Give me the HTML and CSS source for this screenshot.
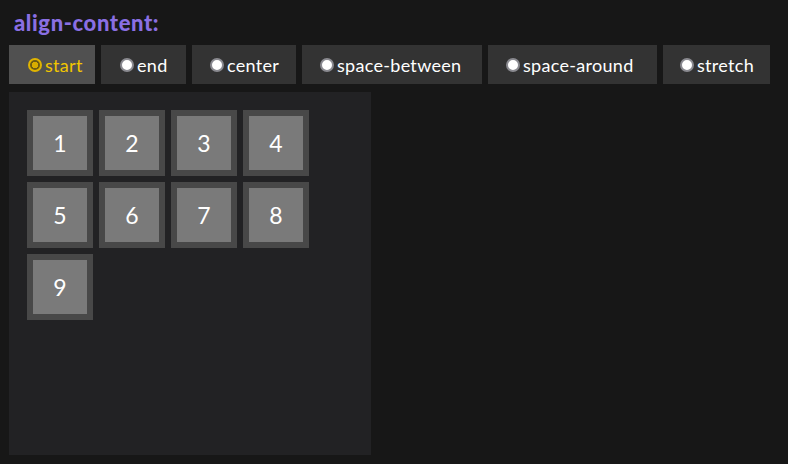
FILE: index.html
```html
<!DOCTYPE html>
<html>
<head>
<meta charset="utf-8">
<link rel="stylesheet" href="styles.css">
</head>
<body>
<h1 class="title">align-content:</h1>
<div class="options">
  <label class="opt active"><span class="radio"></span>start</label>
  <label class="opt"><span class="radio"></span>end</label>
  <label class="opt"><span class="radio"></span>center</label>
  <label class="opt"><span class="radio"></span>space-between</label>
  <label class="opt"><span class="radio"></span>space-around</label>
  <label class="opt"><span class="radio"></span>stretch</label>
</div>
<div class="container">
  <div class="item"><span>1</span></div>
  <div class="item"><span>2</span></div>
  <div class="item"><span>3</span></div>
  <div class="item"><span>4</span></div>
  <div class="item"><span>5</span></div>
  <div class="item"><span>6</span></div>
  <div class="item"><span>7</span></div>
  <div class="item"><span>8</span></div>
  <div class="item"><span>9</span></div>
</div>
</body>
</html>
```
FILE: styles.css
```css
html, body {
  margin: 0;
  padding: 0;
  background: #171717;
}
body {
  padding: 9px;
  font-family: "Lato", "Open Sans", sans-serif;
  color: #ffffff;
}
.title {
  margin: 0 0 0 5px;
  height: 36px;
  font-size: 22px;
  line-height: 28px;
  font-weight: 900;
  letter-spacing: 0.6px;
  color: #8a6fe3;
}
.options {
  display: flex;
  gap: 6px;
  height: 39px;
}
.opt {
  display: flex;
  align-items: center;
  box-sizing: border-box;
  flex: none;
  background: #333333;
  padding: 0 0 0 19px;
  font-size: 18px;
  letter-spacing: 0.3px;
  color: #ffffff;
}
.opt:nth-child(1) { width: 86px; }
.opt:nth-child(2) { width: 85px; }
.opt:nth-child(3) { width: 104px; padding-left: 18px; }
.opt:nth-child(4) { width: 180px; padding-left: 18px; }
.opt:nth-child(5) { width: 169px; padding-left: 18px; }
.opt:nth-child(6) { width: 107px; padding-left: 17px; }
.radio {
  flex: none;
  width: 14px;
  height: 14px;
  box-sizing: border-box;
  border-radius: 50%;
  background: #ffffff;
  border: 2px solid #8a8a90;
  margin-right: 3px;
}
.opt.active {
  background: #505050;
  color: #f2c600;
}
.opt.active .radio {
  border: 2px solid #e0b400;
  background: radial-gradient(circle, #d8ad00 0 3px, #6d5c12 3.5px);
}
.container {
  margin-top: 8px;
  width: 362px;
  height: 363px;
  box-sizing: border-box;
  padding: 18px;
  background: #222224;
  display: flex;
  flex-wrap: wrap;
  align-content: flex-start;
  gap: 6px;
}
.item {
  width: 66px;
  height: 66px;
  box-sizing: border-box;
  border: 6px solid #484848;
  background: #7a7a7a;
  display: flex;
  align-items: center;
  justify-content: center;
  font-size: 23px;
  color: #ffffff;
}
```
